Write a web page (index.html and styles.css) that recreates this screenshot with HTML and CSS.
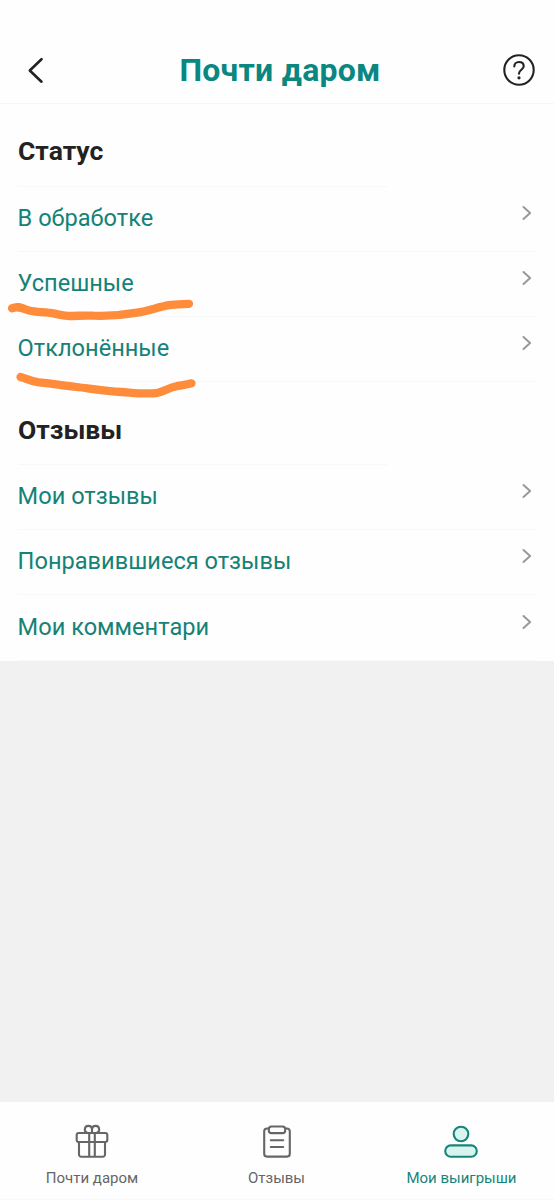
FILE: index.html
```html
<!DOCTYPE html>
<html lang="ru">
<head>
<meta charset="utf-8">
<title>Почти даром</title>
<link rel="stylesheet" href="styles.css">
</head>
<body>
<div class="app">
  <header class="header">
    <svg class="back" viewBox="0 0 32 32"><path d="M24.500 5.200 12.800 16.500l11.700 11.200"/></svg>
    <h1 class="title">Почти даром</h1>
    <svg class="help" viewBox="0 0 32 32"><circle cx="16" cy="16" r="14.7"/><path d="M11.3 12.5c0-2.7 1.9-4.5 4.7-4.5s4.7 1.7 4.7 4.2c0 3.4-4.7 3.8-4.7 7.4v.2"/><circle class="dot" cx="16" cy="23.8" r="1.6"/></svg>
  </header>
  <main class="content">
    <section class="group">
      <h2 class="heading heading-status">Статус</h2>
      <a class="row"><span class="label">В обработке</span><svg class="chevron" viewBox="0 0 10 16"><path d="m1.500 2 6.600 6-6.600 6"/></svg></a>
      <a class="row"><span class="label">Успешные</span><svg class="chevron" viewBox="0 0 10 16"><path d="m1.500 2 6.600 6-6.600 6"/></svg></a>
      <a class="row"><span class="label">Отклонённые</span><svg class="chevron" viewBox="0 0 10 16"><path d="m1.500 2 6.600 6-6.600 6"/></svg></a>
    </section>
    <section class="group">
      <h2 class="heading heading-reviews">Отзывы</h2>
      <a class="row"><span class="label">Мои отзывы</span><svg class="chevron" viewBox="0 0 10 16"><path d="m1.500 2 6.600 6-6.600 6"/></svg></a>
      <a class="row"><span class="label">Понравившиеся отзывы</span><svg class="chevron" viewBox="0 0 10 16"><path d="m1.500 2 6.600 6-6.600 6"/></svg></a>
      <a class="row"><span class="label">Мои комментари</span><svg class="chevron" viewBox="0 0 10 16"><path d="m1.500 2 6.600 6-6.600 6"/></svg></a>
    </section>
    <svg class="marks" viewBox="0 0 200 110">
      <path d="M12 18.300c5-2.400 9-1 14 1.200 6 2.700 14 2.200 22 3.200 8 .8 15 3.300 22 3.300 8-.1 15-.8 23-.3 16 .6 30-.5 44-3 12-2 21-5.500 32-7.500 7-1.200 13-1 20-1.400"/>
      <path d="M20.500 87c6 1.600 10 4.200 17 5.200 12 1.200 26 3.300 39 4.800 14 1.600 29 3.800 45 5 13 .9 26 2.600 36 .8 7-1.500 11-5 18-6.300 6-1.200 11-1.700 16-3.200"/>
    </svg>
  </main>
  <nav class="tabs">
    <a class="tab">
      <svg class="icon" viewBox="0 0 36 36"><rect x="2.700" y="9" width="30.600" height="9" rx="2"/><path d="M5 18v12.500a2.300 2.300 0 0 0 2.300 2.300h21.400a2.300 2.300 0 0 0 2.300-2.300V18M15.200 9v23.500M20.800 9v23.500M18 9h-4.200a3.600 3.600 0 1 1 4.200-3.800M18 9h4.200A3.600 3.600 0 1 0 18 5.200V9"/></svg>
      <span class="tab-label">Почти даром</span>
    </a>
    <a class="tab">
      <svg class="icon icon-list" viewBox="0 0 36 36"><rect x="9.800" y="2.500" width="16.400" height="6.600" rx="2.700"/><path d="M9.800 4.500H8a2.800 2.800 0 0 0-2.800 2.800v22.500A2.800 2.800 0 0 0 8 32.600h20a2.800 2.800 0 0 0 2.800-2.800V7.300A2.800 2.800 0 0 0 28 4.500h-1.800M11.800 16.200h12.400M11.800 23h12.400"/></svg>
      <span class="tab-label">Отзывы</span>
    </a>
    <a class="tab active">
      <svg class="icon" viewBox="0 0 36 36"><circle cx="18" cy="10" r="7.300"/><rect x="2.200" y="21.400" width="31.600" height="11.400" rx="5.700"/></svg>
      <span class="tab-label">Мои выигрыши</span>
    </a>
  </nav>
</div>
</body>
</html>
```

FILE: styles.css
```css
* { box-sizing: border-box; }
body { margin: 0; font-family: Roboto, "Noto Sans", sans-serif; background: #f1f1f1; }
.app { height: 1200px; display: flex; flex-direction: column; overflow: hidden; }
svg { fill: none; stroke-linecap: round; stroke-linejoin: round; overflow: visible; }

.header { height: 104px; padding: 37px 19px 0 17px; display: flex; align-items: center; justify-content: space-between; background: #fefefe; border-bottom: 1px solid #f6f6f6; }
.back { width: 32px; height: 32px; stroke: #222; stroke-width: 2.6; margin-top: -1px; }
.title { margin: 0 0 1px 8px; font-size: 32px; line-height: 40px; font-weight: 700; color: #0a8780; letter-spacing: .25px; }
.help { width: 32px; height: 32px; stroke: #222; stroke-width: 2.1; }
.dot { fill: #222; stroke: none; }

.content { position: relative; background: #fefefe; height: 557px; }
.group { padding: 0 18px; }
.heading { margin: 0; font-size: 26.5px; line-height: 30px; font-weight: 700; color: #222; border-bottom: 1px solid #f8f8f8; }
.heading-status { width: 370px; height: 82.600px; padding-top: 32px; }
.heading-reviews { width: 369px; height: 82.600px; padding-top: 32.500px; }
.row { height: 65.250px; padding-bottom: 2px; display: flex; align-items: center; justify-content: space-between; border-bottom: 1px solid #f8f8f8; }
.label { margin-left: -.4px; font-size: 23.6px; line-height: 30px; color: #148277; }
.chevron { width: 10px; height: 16px; margin: 0 4px 10px 0; stroke: #999; stroke-width: 2; }
.marks { position: absolute; left: 0; top: 186px; width: 200px; height: 110px; stroke: #ff8c3b; stroke-width: 8.300px; }

.tabs { height: 98px; margin-top: auto; display: grid; grid-template-columns: 184px 185px 185px; background: #fefefe; border-bottom: 1px solid #f8f8f8; }
.tab { display: flex; flex-direction: column; align-items: center; padding-top: 21.500px; color: #666; }
.icon { width: 36px; height: 36px; margin-left: -1px; stroke: currentColor; stroke-width: 2.1; }
.icon-list { margin-left: 0; }
.tab-label { margin-top: 9.500px; font-size: 15px; line-height: 18px; white-space: nowrap; }
.active { color: #168579; }
.active .icon { margin-left: -2px; fill: #d9f3ef; }
```
